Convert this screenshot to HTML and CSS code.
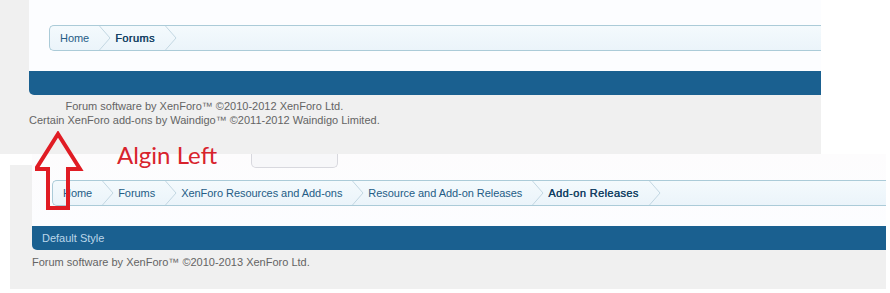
FILE: index.html
```html
<!DOCTYPE html>
<html lang="en">
<head>
    <meta charset="UTF-8">
    <title>XenForo footer - align left</title>
    <link rel="stylesheet" href="styles.css">
</head>
<body>
    <div class="shot shot-old">
        <div class="page-content">
            <nav class="breadcrumb">
                <a class="crumb" href="#">Home</a>
                <span class="arrow"><svg width="12" height="24" viewBox="0 0 12 24"><polyline points="0.5,0 11,12 0.5,24" /></svg></span>
                <a class="crumb current" href="#">Forums</a>
                <span class="arrow"><svg width="12" height="24" viewBox="0 0 12 24"><polyline points="0.5,0 11,12 0.5,24" /></svg></span>
            </nav>
        </div>
        <div class="footer-bar"></div>
        <div class="footer-legal">
            <div class="copyright copyright-centered">
                Forum software by XenForo™ ©2010-2012 XenForo Ltd.<br>
                Certain XenForo add-ons by Waindigo™ ©2011-2012 Waindigo Limited.
            </div>
        </div>
    </div>

    <div class="shot shot-new">
        <div class="page-content">
            <div class="search-tab"></div>
            <nav class="breadcrumb">
                <a class="crumb" href="#">Home</a>
                <span class="arrow"><svg width="12" height="24" viewBox="0 0 12 24"><polyline points="0.5,0 11,12 0.5,24" /></svg></span>
                <a class="crumb" href="#">Forums</a>
                <span class="arrow"><svg width="12" height="24" viewBox="0 0 12 24"><polyline points="0.5,0 11,12 0.5,24" /></svg></span>
                <a class="crumb" href="#">XenForo Resources and Add-ons</a>
                <span class="arrow"><svg width="12" height="24" viewBox="0 0 12 24"><polyline points="0.5,0 11,12 0.5,24" /></svg></span>
                <a class="crumb" href="#">Resource and Add-on Releases</a>
                <span class="arrow"><svg width="12" height="24" viewBox="0 0 12 24"><polyline points="0.5,0 11,12 0.5,24" /></svg></span>
                <a class="crumb current" href="#">Add-on Releases</a>
                <span class="arrow"><svg width="12" height="24" viewBox="0 0 12 24"><polyline points="0.5,0 11,12 0.5,24" /></svg></span>
            </nav>
        </div>
        <div class="footer-bar"><span class="style-chooser">Default Style</span></div>
        <div class="footer-legal">
            <div class="copyright">Forum software by XenForo™ ©2010-2013 XenForo Ltd.</div>
        </div>
    </div>

    <!-- red markup drawn over both screenshots -->
    <div class="note">
        <svg class="note-arrow" width="56" height="86" viewBox="0 0 56 86">
            <polygon points="23,3 45,38 33,38 33,77 13,77 13,38 1,38" />
        </svg>
        <span class="note-text">Algin Left</span>
    </div>
</body>
</html>
```

FILE: styles.css
```css
body {
    margin: 0;
    background: #fff;
    font-family: "Liberation Sans", Arial, sans-serif;
    font-size: 11px;
    position: relative;
    width: 890px;
    height: 293px;
    overflow: hidden;
}

.shot {
    box-sizing: border-box;
    background: #f0f0f0;
}

.shot-old {
    width: 821px;
    height: 154px;
    padding-left: 29px;
}

.shot-new {
    width: 876px;
    height: 135px;
    margin-left: 10px;
    padding-left: 22px;
    background: linear-gradient(#fff 11px, #f0f0f0 11px);
}

.page-content {
    background: #fcfdff;
    padding: 25px 0 20px 20px;
}

.shot-new .page-content {
    padding-top: 0;
    background: linear-gradient(#fdfcfd, #fcfdff);
}

.search-tab {
    width: 85px;
    height: 13px;
    margin-left: 199px;
    margin-bottom: 12px;
    background: #f7f7f9;
    border: 1px solid #d8d8de;
    border-top: none;
    border-radius: 0 0 5px 5px;
}

.breadcrumb {
    display: flex;
    align-items: center;
    height: 24px;
    border: 1px solid #abcbd8;
    border-right: none;
    border-radius: 5px 0 0 5px;
    background: linear-gradient(#f4fafd, #ebf4fa);
}

.crumb {
    color: #245c86;
    text-decoration: none;
    padding: 0 10px 0 4px;
    line-height: 24px;
    letter-spacing: -0.05px;
}

.crumb:first-child {
    padding-left: 10px;
}

.crumb.current {
    color: #123f63;
    letter-spacing: 0.4px;
    text-shadow: 0.3px 0 0 #123f63;
}

.arrow {
    display: flex;
}

.arrow polyline {
    fill: none;
    stroke: #c3d7e2;
    stroke-width: 1;
}

.footer-bar {
    height: 24px;
    background: #1a6090;
    border-radius: 0 0 0 5px;
    display: flex;
    align-items: center;
}

.style-chooser {
    color: #bcd6ea;
    padding-left: 10px;
    font-size: 11px;
}

.footer-legal {
    color: #646464;
    line-height: 14px;
}

.shot-old .footer-legal {
    padding-top: 4px;
}

.shot-new .footer-legal {
    padding-top: 5px;
}

.copyright-centered {
    display: inline-block;
    text-align: center;
}

.note {
    position: absolute;
    left: 0;
    top: 0;
}

.note-arrow {
    position: absolute;
    left: 35px;
    top: 131px;
}

.note-arrow polygon {
    fill: none;
    stroke: #e01c24;
    stroke-width: 4;
    stroke-linejoin: miter;
}

.note-text {
    position: absolute;
    left: 117px;
    top: 140px;
    color: #d8232c;
    font-family: Lato, "Open Sans", sans-serif;
    font-size: 24px;
    white-space: nowrap;
}
```
